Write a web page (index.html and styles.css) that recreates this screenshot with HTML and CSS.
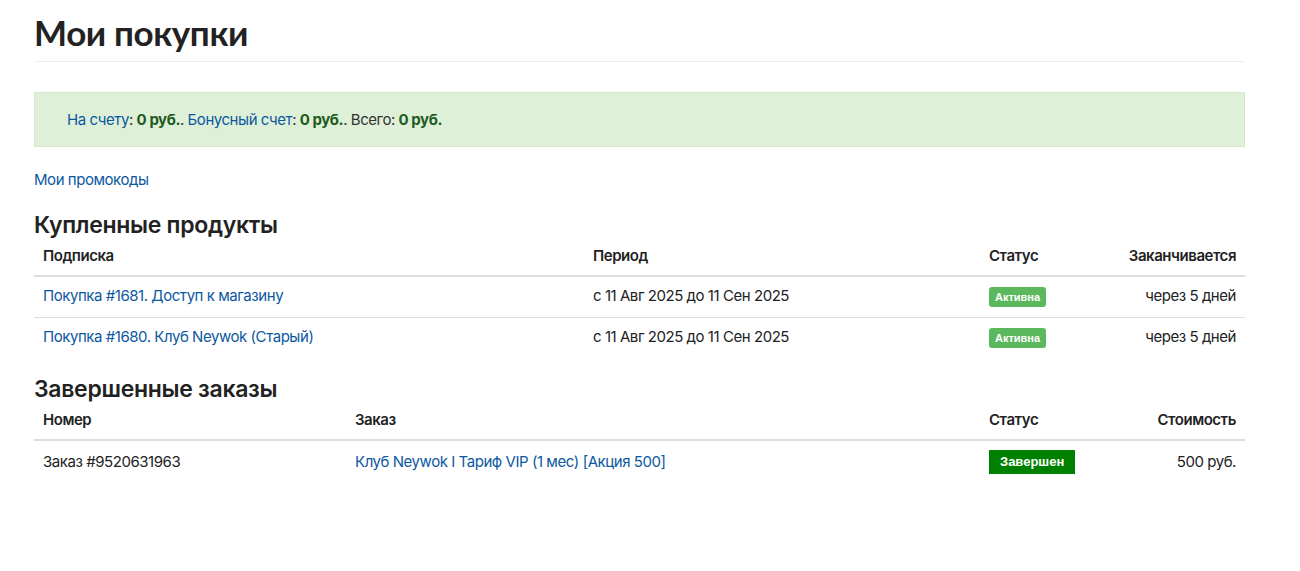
FILE: index.html
```html
<!DOCTYPE html>
<html lang="ru">
<head>
<meta charset="utf-8">
<link rel="stylesheet" href="styles.css">
</head>
<body>
<div class="page">
  <h1 class="title">Мои покупки</h1>
  <div class="alert">
    <span class="alert-text"><a class="link" href="#">На счету</a>: <b>0 руб.</b>. <a class="link" href="#">Бонусный счет</a>: <b>0 руб.</b>. Всего: <b>0 руб.</b></span>
  </div>
  <a class="link promo" href="#">Мои промокоды</a>
  <h2 class="section">Купленные продукты</h2>
  <table class="tbl">
    <thead>
      <tr><th class="c1">Подписка</th><th class="c2">Период</th><th class="c3">Статус</th><th class="right">Заканчивается</th></tr>
    </thead>
    <tbody>
      <tr><td><a class="link" href="#">Покупка #1681. Доступ к магазину</a></td><td>с 11 Авг 2025 до 11 Сен 2025</td><td><span class="badge">Активна</span></td><td class="right">через 5 дней</td></tr>
      <tr><td><a class="link" href="#">Покупка #1680. Клуб Neywok (Старый)</a></td><td>с 11 Авг 2025 до 11 Сен 2025</td><td><span class="badge">Активна</span></td><td class="right">через 5 дней</td></tr>
    </tbody>
  </table>
  <h2 class="section second">Завершенные заказы</h2>
  <table class="tbl">
    <thead>
      <tr><th class="d1">Номер</th><th class="d2">Заказ</th><th class="c3">Статус</th><th class="right">Стоимость</th></tr>
    </thead>
    <tbody>
      <tr><td>Заказ #9520631963</td><td><a class="link" href="#">Клуб Neywok I Тариф VIP (1 мес) [Акция 500]</a></td><td><span class="badge done">Завершен</span></td><td class="right">500 руб.</td></tr>
    </tbody>
  </table>
</div>
</body>
</html>
```
FILE: styles.css
```css
html, body { margin: 0; padding: 0; background: #fff; }
body { font-family: Inter, "Noto Sans", sans-serif; font-size: 15px; color: #222; letter-spacing: -0.45px; }
.page { width: 1211px; margin-left: 34px; }
.title { font-family: Lato, sans-serif; font-weight: 700; font-size: 35px; color: #222; letter-spacing: -0.4px; margin: 0; padding-top: 11px; line-height: 42px; padding-bottom: 8px; border-bottom: 1px solid #eee; }
.alert { margin-top: 30px; background: #dff0d8; border: 1px solid #d6e9c6; height: 53px; padding-left: 32px; display: flex; align-items: center; color: #333; }
.alert b { color: #1e5b1e; font-weight: 700; }
.link { color: #0b58a0; text-decoration: none; }
.promo { display: block; margin-top: 23px; line-height: 20px; }
.section { font-size: 23px; font-weight: 600; margin: 22px 0 0; line-height: 26px; color: #222; letter-spacing: -0.3px; }
.section.second { margin-top: 18px; }
.tbl { width: 100%; border-collapse: collapse; margin-top: 2px; }
.tbl th { text-align: left; font-weight: 600; padding: 6px 9px 9px; line-height: 20px; border-bottom: 2px solid #ddd; }
.tbl td { padding: 9px 9px 10px; line-height: 20px; border-top: 1px solid #ddd; }
.tbl tbody tr:first-child td { border-top: none; }
.tbl .right { text-align: right; }
.c1 { width: 532px; }
.c2 { width: 378px; }
.c3 { width: 94px; }
.d1 { width: 294px; }
.d2 { width: 616px; }
.badge { display: inline-block; background: #5cb85c; color: #fff; font-family: "Liberation Sans", Arial, sans-serif; font-weight: 700; font-size: 11px; line-height: 20px; padding: 0 6px; border-radius: 3px; letter-spacing: 0; vertical-align: middle; }
.badge.done { background: #008000; font-size: 13px; line-height: 24px; padding: 0 11px; border-radius: 0; }
```
